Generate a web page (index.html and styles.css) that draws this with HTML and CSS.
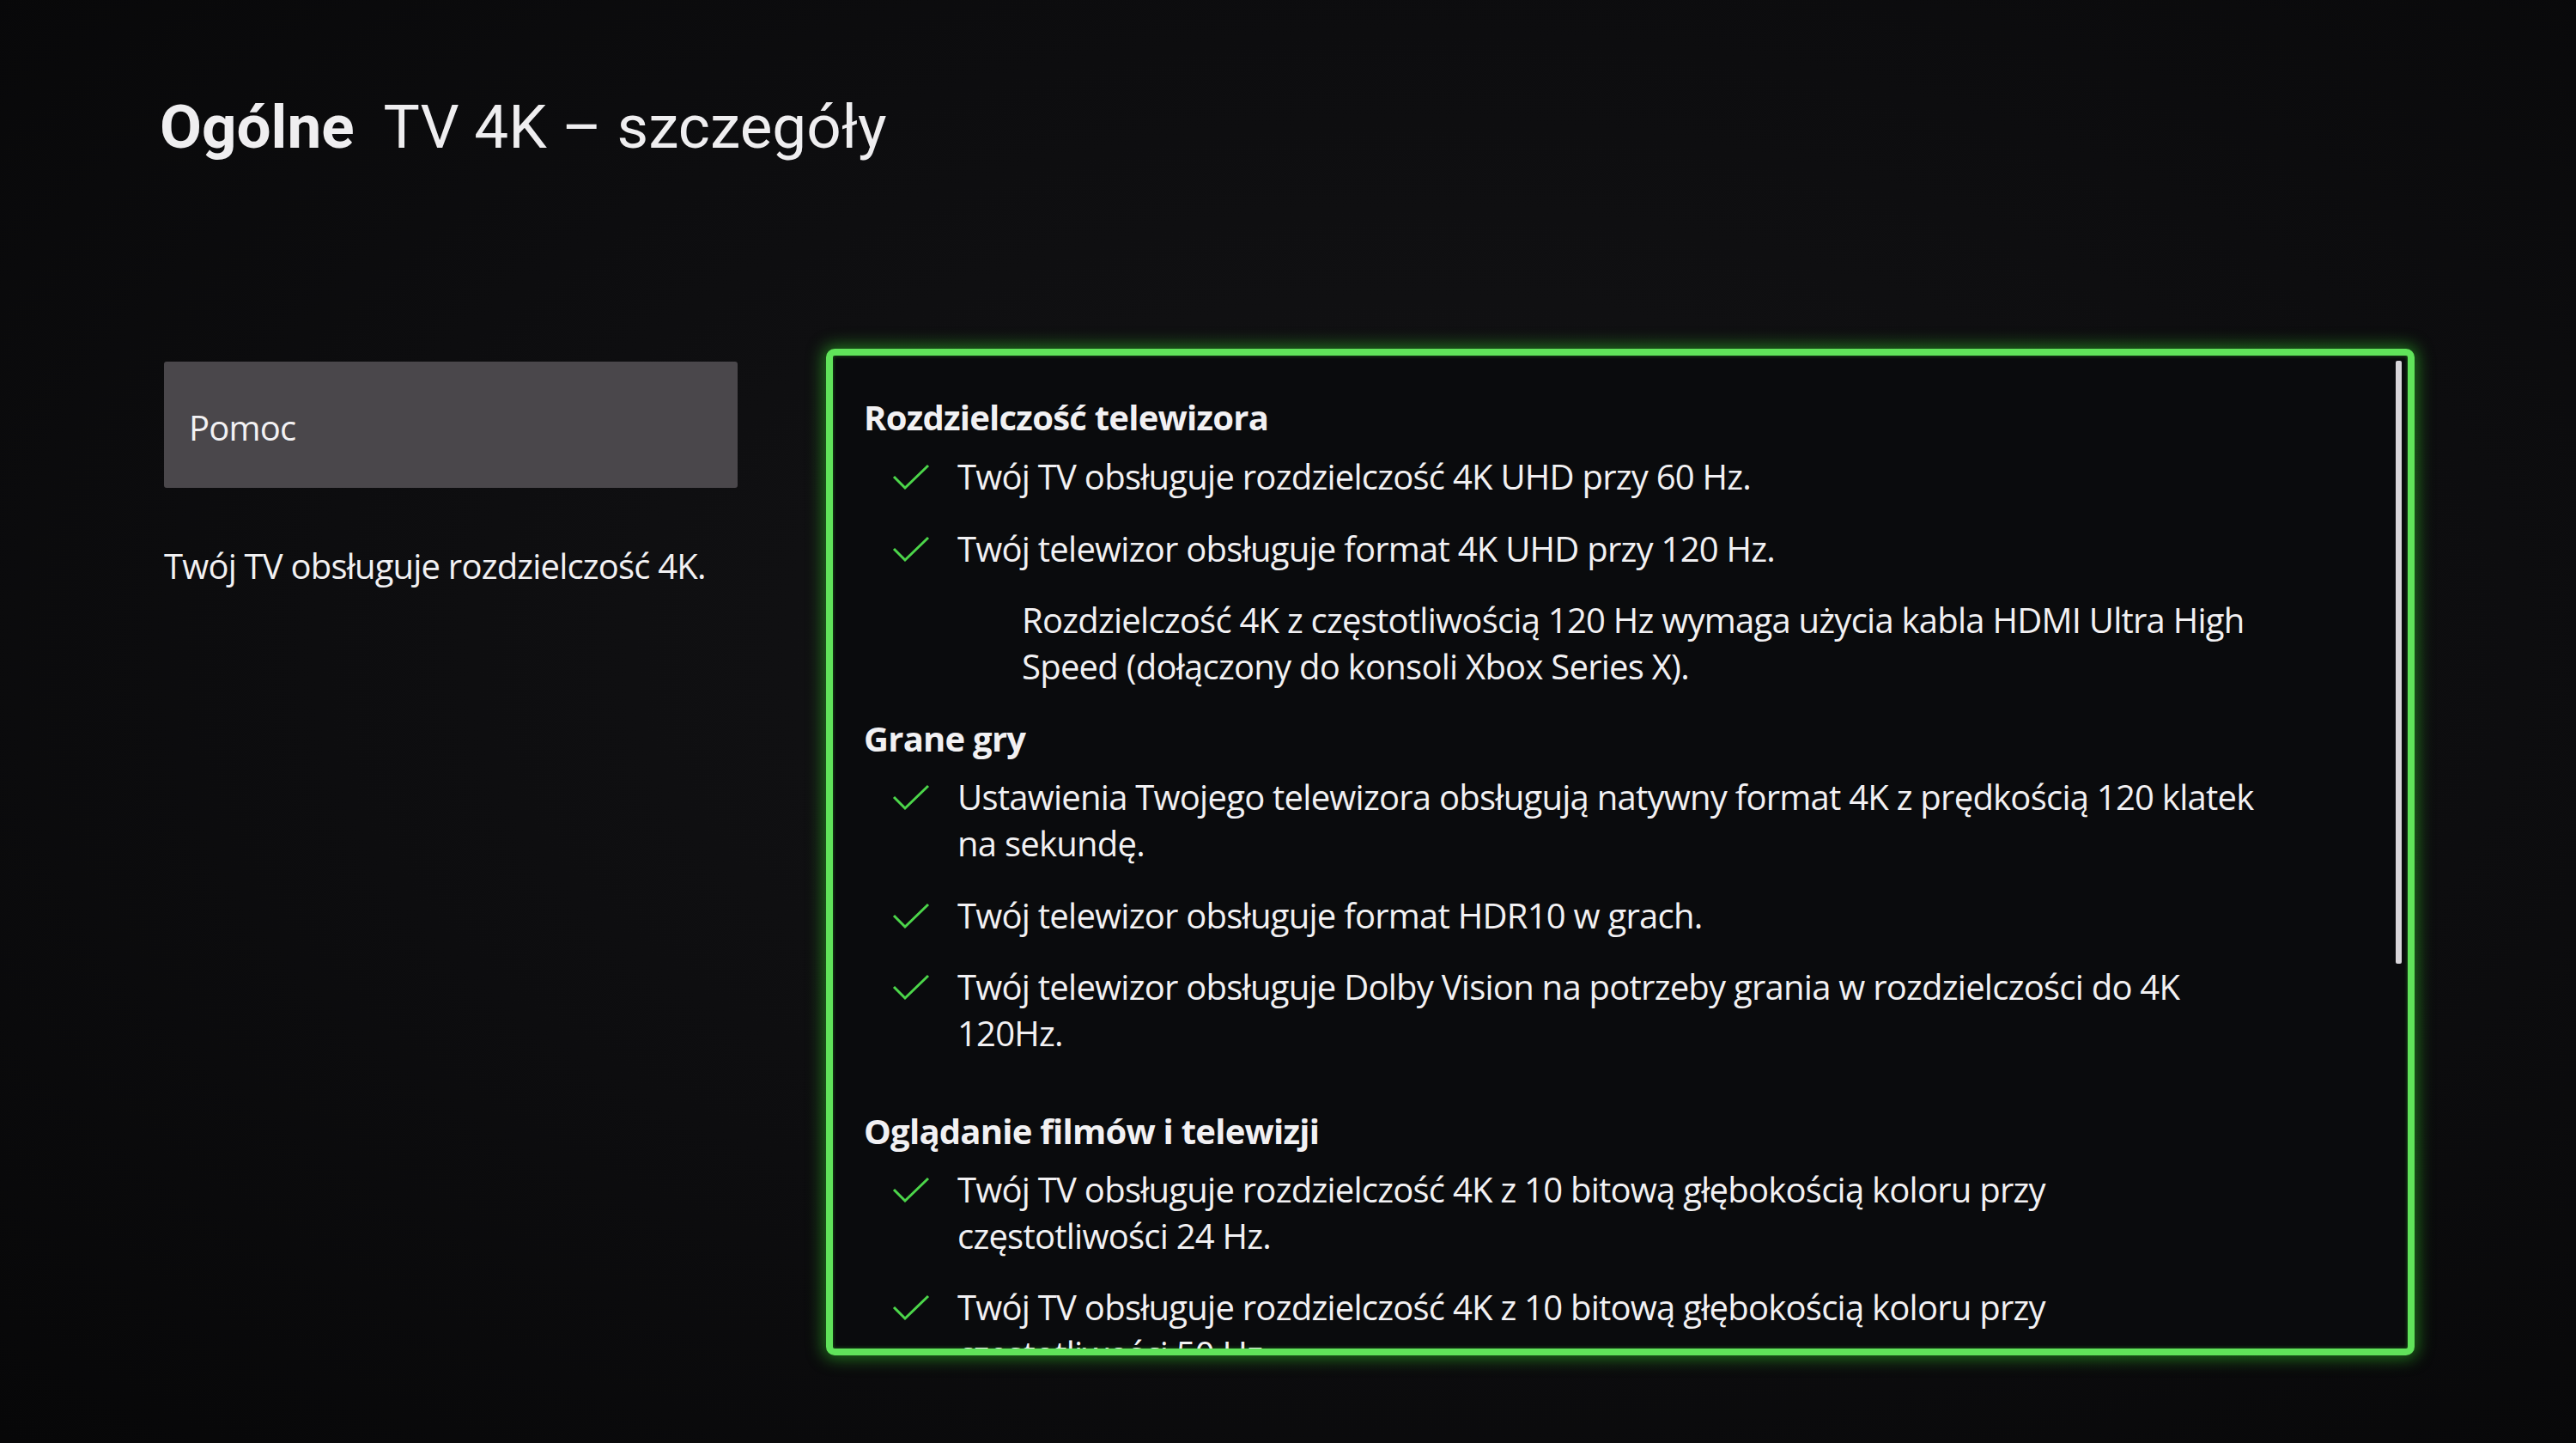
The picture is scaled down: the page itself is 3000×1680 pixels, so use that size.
FILE: index.html
```html
<!DOCTYPE html>
<html lang="pl">
<head>
    <meta charset="UTF-8">
    <meta name="viewport" content="width=device-width, initial-scale=1.0">
    <title>TV 4K – szczegóły</title>
    <link rel="stylesheet" href="styles.css">
</head>
<body>
    <div class="screen">
        <header class="title">
            <span class="title-section">Ogólne</span>
            <span class="title-page">TV 4K – szczegóły</span>
        </header>

        <div class="layout">
            <aside class="side">
                <div class="side-button">Pomoc</div>
                <p class="side-info">Twój TV obsługuje rozdzielczość 4K.</p>
            </aside>

            <section class="details">
                <div class="details-scroll">
                    <div class="group">
                        <h2>Rozdzielczość telewizora</h2>
                        <ul class="checks">
                            <li>
                                <svg class="check" viewBox="0 0 44 32"><path d="M2 15 L15 28 L42 2"/></svg>
                                <span>Twój TV obsługuje rozdzielczość 4K UHD przy 60 Hz.</span>
                            </li>
                            <li>
                                <svg class="check" viewBox="0 0 44 32"><path d="M2 15 L15 28 L42 2"/></svg>
                                <span>Twój telewizor obsługuje format 4K UHD przy 120 Hz.</span>
                            </li>
                        </ul>
                        <p class="note">Rozdzielczość 4K z częstotliwością 120 Hz wymaga użycia kabla HDMI Ultra High Speed (dołączony do konsoli Xbox Series X).</p>
                    </div>

                    <div class="group">
                        <h2>Grane gry</h2>
                        <ul class="checks">
                            <li>
                                <svg class="check" viewBox="0 0 44 32"><path d="M2 15 L15 28 L42 2"/></svg>
                                <span>Ustawienia Twojego telewizora obsługują natywny format 4K z prędkością 120 klatek na sekundę.</span>
                            </li>
                            <li>
                                <svg class="check" viewBox="0 0 44 32"><path d="M2 15 L15 28 L42 2"/></svg>
                                <span>Twój telewizor obsługuje format HDR10 w grach.</span>
                            </li>
                            <li>
                                <svg class="check" viewBox="0 0 44 32"><path d="M2 15 L15 28 L42 2"/></svg>
                                <span>Twój telewizor obsługuje Dolby Vision na potrzeby grania w rozdzielczości do 4K 120Hz.</span>
                            </li>
                        </ul>
                    </div>

                    <div class="group">
                        <h2>Oglądanie filmów i telewizji</h2>
                        <ul class="checks">
                            <li>
                                <svg class="check" viewBox="0 0 44 32"><path d="M2 15 L15 28 L42 2"/></svg>
                                <span>Twój TV obsługuje rozdzielczość 4K z 10 bitową głębokością koloru przy częstotliwości 24 Hz.</span>
                            </li>
                            <li>
                                <svg class="check" viewBox="0 0 44 32"><path d="M2 15 L15 28 L42 2"/></svg>
                                <span>Twój TV obsługuje rozdzielczość 4K z 10 bitową głębokością koloru przy częstotliwości 50 Hz.</span>
                            </li>
                        </ul>
                    </div>
                </div>
                <div class="scrollbar"></div>
            </section>
        </div>
    </div>
</body>
</html>
```

FILE: styles.css
```css
html, body {
    margin: 0;
    padding: 0;
    background: #0b0b0d;
}
body {
    font-family: 'Open Sans', 'Noto Sans', sans-serif;
    color: #f2f1f3;
}
.screen {
    width: 3000px;
    height: 1680px;
    box-sizing: border-box;
    padding: 100px 0 0 191px;
    background: radial-gradient(ellipse at 55% 45%, #141416 0%, #0d0d0f 55%, #070708 100%);
    overflow: hidden;
}
.title {
    font-family: Roboto, 'Noto Sans', sans-serif;
    font-size: 71px;
    line-height: 96px;
    color: #efeef0;
    display: flex;
    gap: 34px;
    margin-left: -5px;
}
.title-section {
    font-weight: 700;
}
.title-page {
    font-weight: 400;
}
.layout {
    display: flex;
    gap: 103px;
    margin-top: 210px;
}
.side {
    width: 668px;
    padding-top: 15px;
    flex-shrink: 0;
}
.side-button {
    height: 147px;
    box-sizing: border-box;
    padding: 6px 29px 0 29px;
    display: flex;
    align-items: center;
    background: #4a474b;
    border-radius: 3px;
    font-size: 40px;
    letter-spacing: -0.8px;
}
.side-info {
    margin: 64px 0 0 0;
    font-size: 40px;
    letter-spacing: -0.8px;
    line-height: 54px;
}
.details {
    position: relative;
    width: 1850px;
    height: 1172px;
    box-sizing: border-box;
    border: 8px solid #60e35a;
    border-radius: 10px;
    background: #0a0b0d;
    box-shadow: 0 0 18px 4px rgba(48, 190, 40, 0.55), inset 0 0 4px rgba(48, 190, 40, 0.5);
    overflow: hidden;
}
.details-scroll {
    padding: 45px 0 0 36px;
    font-size: 40px;
    letter-spacing: -0.75px;
    line-height: 54px;
}
/* flex column keeps the list's bottom margin from collapsing into the next heading */
.group {
    display: flex;
    flex-direction: column;
}
.group h2 {
    margin: 30px 0 14px 0;
    font-size: 40px;
    font-weight: 700;
    line-height: 54px;
}
.group:first-child h2 {
    margin-top: 0;
    margin-bottom: 15px;
}
.checks {
    list-style: none;
    margin: 0;
    padding: 0;
}
.checks li {
    display: flex;
    align-items: flex-start;
    margin-bottom: 29.5px;
    padding-left: 33px;
}
.checks span {
    max-width: 1520px;
}
.check {
    width: 44px;
    height: 32px;
    flex-shrink: 0;
    margin: 12px 32px 0 0;
    fill: none;
    stroke: #4cd64a;
    stroke-width: 3;
}
.note {
    margin: 0;
    padding-left: 184px;
    max-width: 1445px;
}
.scrollbar {
    position: absolute;
    top: 6px;
    right: 7px;
    width: 7px;
    height: 702px;
    background: #d8d6da;
    border-radius: 2px;
}
```
